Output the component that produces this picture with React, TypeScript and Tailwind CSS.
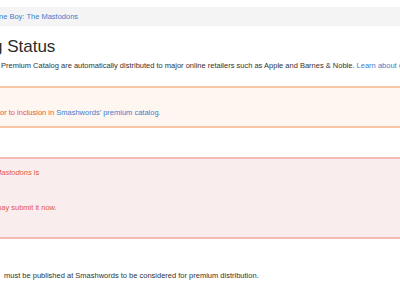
import React from "react";

export default function App() {
  return (
    <div className="w-[400px] h-[284px] overflow-hidden bg-white font-['Liberation_Sans',Arial,sans-serif] text-[#333]">
      <div className="pt-[7px]">
        <div className="h-[19px] bg-[#f4f4f4] flex items-center overflow-hidden whitespace-nowrap">
          <span className="text-[7.5px] text-[#3f7dcb] -ml-[1px]">ne Boy: The Mastodons</span>
        </div>
        <div className="mt-[12px] h-[17px] leading-[17px] whitespace-nowrap">
          <span className="text-[17px] text-[#2b2b2b] -ml-[7px] inline-block">g Status</span>
        </div>
        <div className="mt-[6px] h-[10px] leading-[10px] whitespace-nowrap text-[7.5px] text-[#333]">
          <span className="ml-[1px]">Premium Catalog are automatically distributed to major online retailers such as Apple and Barnes &amp; Noble. </span>
          <span className="text-[#3f7dcb]">Learn about our premium catalog</span>
        </div>
        <div className="mt-[15px] h-[42px] border-y-2 border-[#f9c5a5] bg-[#fdf6f1] flex items-end pb-[8px] whitespace-nowrap">
          <div className="text-[7.5px] leading-[10px] text-[#e4583e]">
            or to inclusion in <span className="text-[#3f7dcb]">Smashwords' premium catalog</span>.
          </div>
        </div>
        <div className="mt-[29px] h-[82px] border-y-2 border-[#f4bbb3] bg-[#f9eeed] whitespace-nowrap text-[7.5px] leading-[10px] text-[#e3563f]">
          <div className="mt-[9px] -ml-[5px]">
            <i>Mastodons</i> is
          </div>
          <div className="mt-[25px] -ml-[5px]">may submit it now.</div>
        </div>
        <div className="mt-[32px] whitespace-nowrap text-[7.5px] leading-[10px] text-[#333]">
          <span className="ml-[4px]">must be published at Smashwords to be considered for premium distribution.</span>
        </div>
      </div>
    </div>
  );
}
